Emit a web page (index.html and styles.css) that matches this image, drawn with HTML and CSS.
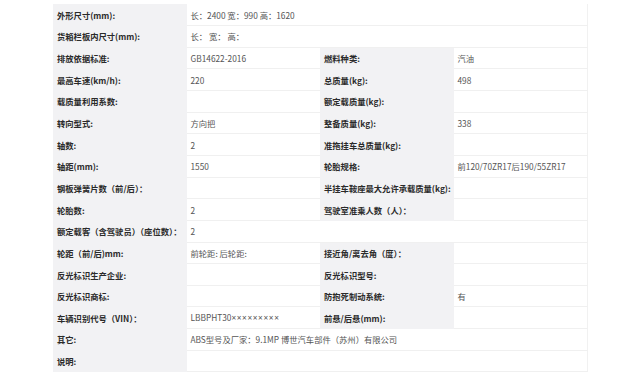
FILE: index.html
```html
<!DOCTYPE html>
<html lang="zh">
<head>
<meta charset="utf-8">
<link rel="stylesheet" href="styles.css">
</head>
<body>
<table class="spec">
  <colgroup><col class="c"><col class="c"><col class="c"><col class="c"></colgroup>
  <tr><th>外形尺寸(mm):</th><td colspan="3">长：2400 宽：990 高：1620</td></tr>
  <tr><th>货箱栏板内尺寸(mm):</th><td colspan="3">长： 宽： 高：</td></tr>
  <tr><th>排放依据标准:</th><td>GB14622-2016</td><th>燃料种类:</th><td>汽油</td></tr>
  <tr><th>最高车速(km/h):</th><td>220</td><th>总质量(kg):</th><td>498</td></tr>
  <tr><th>载质量利用系数:</th><td></td><th>额定载质量(kg):</th><td></td></tr>
  <tr><th>转向型式:</th><td>方向把</td><th>整备质量(kg):</th><td>338</td></tr>
  <tr><th>轴数:</th><td>2</td><th>准拖挂车总质量(kg):</th><td></td></tr>
  <tr><th>轴距(mm):</th><td>1550</td><th>轮胎规格:</th><td>前120/70ZR17后190/55ZR17</td></tr>
  <tr><th>钢板弹簧片数（前/后）：</th><td></td><th>半挂车鞍座最大允许承载质量(kg):</th><td></td></tr>
  <tr><th>轮胎数:</th><td>2</td><th>驾驶室准乘人数（人）：</th><td></td></tr>
  <tr><th>额定载客（含驾驶员）（座位数）：</th><td colspan="3">2</td></tr>
  <tr><th>轮距（前/后)mm:</th><td>前轮距: 后轮距:</td><th>接近角/离去角（度）：</th><td></td></tr>
  <tr><th>反光标识生产企业:</th><td></td><th>反光标识型号:</th><td></td></tr>
  <tr><th>反光标识商标:</th><td></td><th>防抱死制动系统:</th><td>有</td></tr>
  <tr><th>车辆识别代号（VIN）：</th><td>LBBPHT30<span class="mask">×××××××××</span></td><th>前悬/后悬(mm):</th><td></td></tr>
  <tr><th>其它:</th><td colspan="3">ABS型号及厂家：9.1MP 博世汽车部件（苏州）有限公司</td></tr>
  <tr><th>说明:</th><td colspan="3"></td></tr>
</table>
</body>
</html>
```
FILE: styles.css
```css
html, body {
  margin: 0;
  padding: 0;
  background: #ffffff;
}
body {
  padding: 4px 0 0 53px;
  font-family: "Noto Sans CJK SC", "Noto Sans", sans-serif;
  font-size: 8.3px;
}
.spec {
  width: 534px;
  table-layout: fixed;
  border-collapse: collapse;
  border-right: 1px solid #f1f1f1;
}
.spec .c {
  width: 133.5px;
}
.spec tr {
  height: 21.65px;
}
.spec th,
.spec td {
  padding: 0 0 0 4px;
  text-align: left;
  vertical-align: middle;
  white-space: nowrap;
  overflow: hidden;
  border-bottom: 1px solid #f0f0f0;
  line-height: 12px;
}
.spec th {
  background: #f2f2f4;
  color: #2a2a2a;
  font-weight: 700;
  border-bottom-color: #f2f2f4;
}
.spec td {
  color: #555555;
  font-weight: 400;
}
.mask {
  font-family: "Noto Sans", sans-serif;
  letter-spacing: 0.6px;
}
```
